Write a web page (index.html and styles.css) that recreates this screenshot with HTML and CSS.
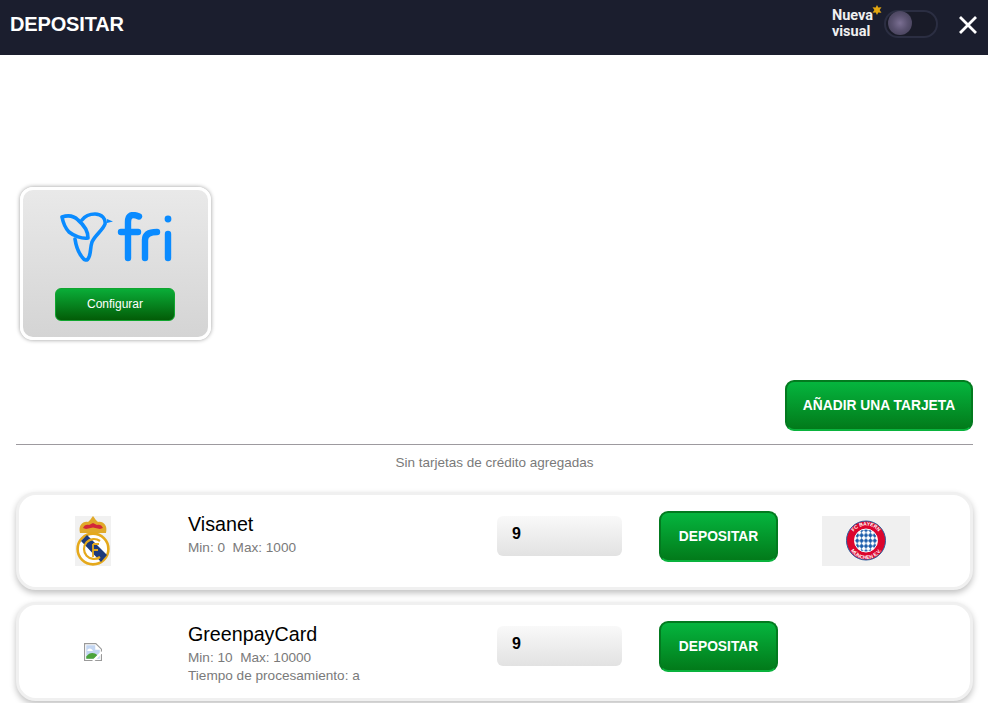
FILE: index.html
```html
<!DOCTYPE html>
<html>
<head>
  <title>Depositar</title>
  <link rel="stylesheet" href="styles.css">
</head>
<body>

<header class="topbar">
  <h1>DEPOSITAR</h1>
  <div class="topbar-right">
    <div class="new-visual">Nueva<br>visual
      <svg class="star" width="10" height="10" viewBox="0 0 10 10">
        <path d="M5 0 L6.3 2.6 L9.5 2.2 L7.6 5 L9.5 7.8 L6.3 7.4 L5 10 L3.7 7.4 L0.5 7.8 L2.4 5 L0.5 2.2 L3.7 2.6 Z" fill="#e3a60f"/>
      </svg>
    </div>
    <div class="switch"><span class="knob"></span></div>
    <svg class="close" width="20" height="20" viewBox="0 0 20 20">
      <path d="M2 2 L18 18 M18 2 L2 18" stroke="#fff" stroke-width="2.8" fill="none"/>
    </svg>
  </div>
</header>

<main class="content">
  <section class="wallets">
    <div class="wallet-card">
      <svg class="fri-logo" width="112" height="50" viewBox="0 0 112 50" fill="none" stroke="#0a8bff" stroke-width="3.6" stroke-linecap="round" stroke-linejoin="round">
        <!-- bird -->
        <path d="M2 5 C8 3 14 4 18 8 C24 13 28 20 28 26 C22 27 14 24 9 20 C5 16 3 10 2 5 Z"/>
        <path d="M22 8 C25 4 30 2 35 2 C42 2 46 7 45 12 C43 18 35 23 32 30 C30 36 31 41 29 45 C27 50 24 48 22 45 C18 40 16 34 15 27"/>
        <path d="M47 7 L53 9.5 L47 11 Z" fill="#0a8bff" stroke="none"/>
        <!-- fri -->
        <path stroke-width="6.4" d="M79 4.5 C72 1.5 68 3 68 10 L68 46 M61 20 L78 20"/>
        <path stroke-width="6.4" d="M85 46 L85 28 C85 22 90 20 97 20"/>
        <path stroke-width="6.4" d="M108 22 L108 46"/>
        <circle cx="108" cy="7" r="3.4" fill="#0a8bff" stroke="none"/>
      </svg>
      <button class="btn btn-small">Configurar</button>
    </div>
  </section>

  <div class="add-row">
    <button class="btn btn-big btn-add">AÑADIR UNA TARJETA</button>
  </div>
  <hr class="divider">
  <p class="no-cards">Sin tarjetas de crédito agregadas</p>

  <div class="method">
    <div class="method-logo">
      <svg width="36" height="50" viewBox="0 0 36 50">
        <rect width="36" height="50" fill="#f1f1f1"/>
        <!-- crown -->
        <path d="M5 17 C3 9 8 5 13 6 C15 4 16 3 16.5 2 L18 0 L19.5 2 C20 3 21 4 23 6 C28 5 33 9 31 17 Z" fill="#e0a92a"/>
        <path d="M8 12 C9 9 12 8 14 9 L18 7 L22 9 C24 8 27 9 28 12 L25 13 L18 11.5 L11 13 Z" fill="#d3273a"/>
        <!-- shield -->
        <circle cx="18" cy="33" r="15.4" fill="#fff" stroke="#e5a91c" stroke-width="2.6"/>
        <path d="M6 25 L12 19 L32 39 L26 46 Z" fill="#1d3a7c"/>
        <path d="M25 25 A10 10 0 1 0 25 41" fill="none" stroke="#e5a91c" stroke-width="2.2"/>
        <path d="M18 28 L18 41 M18 28 L24 28 M18 34 L23 34" stroke="#e5a91c" stroke-width="1.8" fill="none"/>
      </svg>
    </div>
    <div class="method-info">
      <div class="method-name">Visanet</div>
      <div class="method-limits">Min: 0&nbsp; Max: 1000</div>
    </div>
    <input class="amount" type="text" value="9">
    <button class="btn btn-big btn-deposit">DEPOSITAR</button>
    <div class="method-extra">
      <svg width="88" height="50" viewBox="0 0 88 50">
        <defs>
          <pattern id="rhombs" width="4.4" height="5.4" patternUnits="userSpaceOnUse" x="41.8" y="22">
            <rect width="4.4" height="5.4" fill="#fff"/>
            <path d="M2.2 0 L4.4 2.7 L2.2 5.4 L0 2.7 Z" fill="#1b5cab"/>
          </pattern>
          <path id="ring-top" d="M28.5 25 A15.5 15.5 0 0 1 59.5 25"/>
          <path id="ring-bottom" d="M26 25 A18 18 0 0 0 62 25"/>
        </defs>
        <rect width="88" height="50" fill="#f0f0f0"/>
        <circle cx="44" cy="24.5" r="19.5" fill="#dc052d" stroke="#2a5f9e" stroke-width="1"/>
        <circle cx="44" cy="24.5" r="11.5" fill="url(#rhombs)" stroke="#fff" stroke-width="1"/>
        <text class="badge-text"><textPath href="#ring-top" startOffset="50%" text-anchor="middle">FC BAYERN</textPath></text>
        <text class="badge-text"><textPath href="#ring-bottom" startOffset="50%" text-anchor="middle">MÜNCHEN E.V.</textPath></text>
      </svg>
    </div>
  </div>

  <div class="method method-tall">
    <div class="method-logo">
      <svg width="18" height="18" viewBox="0 0 16 16">
        <path d="M0.5 0.5 H10.5 L15.5 5.5 V15.5 H0.5 Z" fill="#fff" stroke="#9a9a9a"/>
        <path d="M2 2 H10 V6 H14 V14 H2 Z" fill="#c3d6f2"/>
        <path d="M3 6 C5 4 7 5 8 7 H3 Z" fill="#fff"/>
        <path d="M2 14 V12 C5 8 9 8 12 11 L9 14 Z" fill="#4ba33c"/>
        <path d="M8 16 L16 8" stroke="#fff" stroke-width="2"/>
      </svg>
    </div>
    <div class="method-info">
      <div class="method-name">GreenpayCard</div>
      <div class="method-limits">Min: 10&nbsp; Max: 10000</div>
      <div class="method-limits">Tiempo de procesamiento: a</div>
    </div>
    <input class="amount" type="text" value="9">
    <button class="btn btn-big btn-deposit">DEPOSITAR</button>
    <div class="method-extra"></div>
  </div>
</main>

</body>
</html>
```

FILE: styles.css
```css
/* Page */
html, body {
  height: 703px;
  overflow: hidden;
}
body {
  margin: 0;
  background-color: white;
  color: #7a7a7a;
  font-family: "Liberation Sans", Arial, sans-serif;
}

/* Top bar */
.topbar {
  display: flex;
  justify-content: space-between;
  align-items: center;
  height: 55px;
  padding: 0 10px 5px;
  box-sizing: border-box;
  background-color: #1b1e2e;
}
.topbar h1 {
  margin: 0 0 1px;
  font-size: 20px;
  color: white;
  letter-spacing: -0.15px;
}
.topbar-right {
  display: flex;
  align-items: center;
}
.new-visual {
  position: relative;
  font-family: "Roboto", sans-serif;
  font-size: 14.5px;
  line-height: 16px;
  font-weight: 700;
  color: #f0f0f0;
  margin: 0 11px 2px 0;
}
.star {
  position: absolute;
  top: -3px;
  right: -9px;
}
.switch {
  width: 54px;
  height: 28px;
  box-sizing: border-box;
  border: 2px solid #2b2e42;
  border-radius: 14px;
  background-color: #191b28;
  margin: 0 20px 2px 0;
  padding-left: 2px;
}
.knob {
  display: block;
  width: 24px;
  height: 24px;
  margin-top: -1px;
  border-radius: 50%;
  background: radial-gradient(circle, #7a6f92 0%, #5a5270 45%, #3c3a50 100%);
}
.close {
  display: block;
}

/* Content */
.content {
  padding: 0 15px 0 16px;
}
.wallets {
  padding: 132px 0 0 4px;
}
.wallet-card {
  display: flex;
  flex-direction: column;
  align-items: center;
  width: 191px;
  height: 153px;
  box-sizing: border-box;
  padding-top: 22px;
  border: 3px solid white;
  border-radius: 13px;
  background: linear-gradient(#e9e9e9, #d4d4d4);
  box-shadow: 0 0 4px rgba(0, 0, 0, 0.4);
}
.fri-logo {
  display: block;
}
.btn {
  border-radius: 6px;
  color: white;
  font-family: "Liberation Sans", Arial, sans-serif;
  font-weight: bold;
  cursor: pointer;
}
.btn-small {
  width: 120px;
  height: 33px;
  margin: 26px 1px 0 0;
  padding-bottom: 3px;
  border: 1px solid #11a52f;
  background: linear-gradient(#0aad38, #035c07);
  font-size: 12px;
  font-weight: normal;
}
.btn-big {
  height: 51px;
  border: 2px solid #037a1f;
  border-bottom-color: #0ab33d;
  border-radius: 9px;
  background: linear-gradient(#05b53e, #027a1a);
  font-size: 13.8px;
}
.add-row {
  display: flex;
  justify-content: flex-end;
  margin-top: 40px;
}
.btn-add {
  width: 188px;
}
.divider {
  margin: 13px 0 0;
  border: 0;
  border-top: 1px solid #9d9a9f;
}
.no-cards {
  margin: 9px 0 21px;
  text-align: center;
  font-size: 13.5px;
  line-height: 17px;
}

/* Payment methods */
.method {
  display: flex;
  align-items: flex-start;
  height: 98px;
  box-sizing: border-box;
  margin-bottom: 12px;
  border: 3px solid #f0f0f0;
  border-radius: 20px;
  background-color: white;
  box-shadow: 0 3px 6px rgba(0, 0, 0, 0.25);
}
.method-tall {
  height: 99px;
}
.method-logo {
  display: flex;
  justify-content: center;
  align-items: center;
  align-self: center;
  width: 148px;
  margin-right: 21px;
  flex: none;
}
.method-logo svg, .method-extra svg {
  display: block;
}
.badge-text {
  fill: white;
  font-family: "Liberation Sans", Arial, sans-serif;
  font-size: 5px;
  font-weight: bold;
}
.method-info {
  width: 309px;
  flex: none;
  margin-top: 18px;
  font-size: 13.6px;
  line-height: 18px;
}
.method-name {
  margin-bottom: 3px;
  font-size: 19.7px;
  line-height: 23px;
  color: black;
}
.amount {
  width: 125px;
  height: 40px;
  box-sizing: border-box;
  flex: none;
  margin-top: 21px;
  padding: 0 15px 4px;
  border: 0;
  border-radius: 6px;
  background: linear-gradient(#f9f9f9, #e2e2e2);
  color: black;
  font-family: "Liberation Sans", Arial, sans-serif;
  font-size: 16px;
  font-weight: bold;
}
.btn-deposit {
  width: 119px;
  flex: none;
  margin: 16px 0 0 37px;
}
.method-extra {
  width: 88px;
  margin: 21px 0 0 44px;
  flex: none;
}
```
